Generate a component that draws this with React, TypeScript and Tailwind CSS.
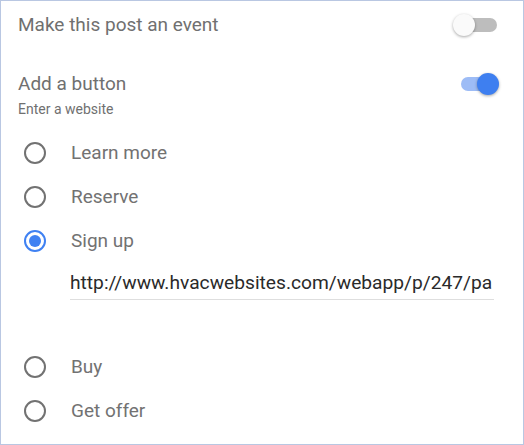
import clsx from 'clsx';

const options = [
  { label: 'Learn more', checked: false },
  { label: 'Reserve', checked: false },
  { label: 'Sign up', checked: true },
];

const more = [
  { label: 'Buy', checked: false },
  { label: 'Get offer', checked: false },
];

function Toggle({ on }: { on: boolean }) {
  return (
    <div className="relative w-[46px] h-[24px] flex items-center">
      <div className={clsx('absolute left-[8px] right-[2px] h-[14px] rounded-full', on ? 'bg-[#9dbcf6]' : 'bg-[#bdbdbd]')} />
      <div
        className={clsx(
          'absolute w-[22px] h-[22px] rounded-full shadow-[0_1px_3px_rgba(0,0,0,0.35)]',
          on ? 'right-0 bg-[#3e7ff0]' : 'left-0 bg-[#fafafa]'
        )}
      />
    </div>
  );
}

function Radio({ label, checked }: { label: string; checked: boolean }) {
  return (
    <div className="h-[44px] flex items-center">
      <div
        className={clsx(
          'w-[22px] h-[22px] rounded-full border-2 flex items-center justify-center ml-[23px] mr-[25px]',
          checked ? 'border-[#3f81f2]' : 'border-[#727272]'
        )}
      >
        {checked && <div className="w-[12px] h-[12px] rounded-full bg-[#3f81f2]" />}
      </div>
      <span className="text-[19px] text-[#727272]">{label}</span>
    </div>
  );
}

export default function App() {
  return (
    <div
      className="w-[524px] h-[445px] border border-[#b9c7e2] bg-white overflow-hidden pt-[1px]"
      style={{ fontFamily: 'Roboto, "Liberation Sans", sans-serif' }}
    >
      <div className="h-[46px] flex items-center justify-between pl-[17px] pr-[24px]">
        <span className="text-[19px] text-[#707070]">Make this post an event</span>
        <Toggle on={false} />
      </div>
      <div className="mt-[24px] h-[24px] flex items-center justify-between pl-[17px] pr-[24px]">
        <span className="text-[19px] text-[#707070]">Add a button</span>
        <Toggle on={true} />
      </div>
      <div className="h-[22px] pt-[5px] pl-[17px] text-[14px] leading-[16px] text-[#707070]">Enter a website</div>
      <div className="mt-[13px]">
        {options.map((o) => <Radio key={o.label} {...o} />)}
      </div>
      <div className="ml-[69px] w-[424px] h-[37px] border-b border-[#dedede] flex items-center">
        <span className="text-[19.2px] text-[#2a2a2a] whitespace-nowrap pt-[5px]">http://www.hvacwebsites.com/webapp/p/247/pa</span>
      </div>
      <div className="mt-[45px]">
        {more.map((o) => <Radio key={o.label} {...o} />)}
      </div>
    </div>
  );
}
